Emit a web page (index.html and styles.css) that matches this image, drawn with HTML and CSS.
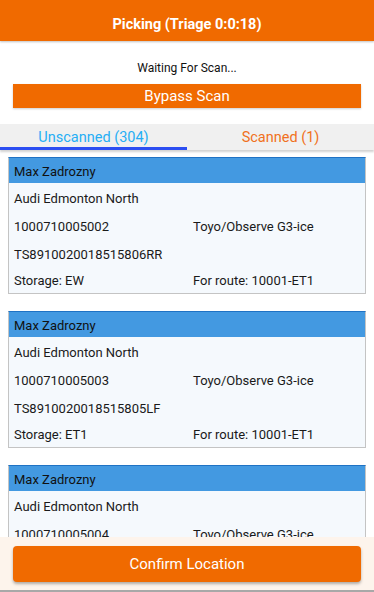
FILE: index.html
```html
<!DOCTYPE html>
<html>
<head>
<meta charset="utf-8">
<link rel="stylesheet" href="styles.css">
</head>
<body>
<div class="app">
  <header class="topbar"><span class="title">Picking (Triage 0:0:18)</span></header>
  <section class="scan">
    <div class="waiting">Waiting For Scan...</div>
    <button class="bypass">Bypass Scan</button>
  </section>
  <nav class="tabs">
    <div class="tab active">Unscanned (304)</div>
    <div class="tab other">Scanned (1)</div>
  </nav>
  <main class="list">
    <div class="card">
      <div class="card-head">Max Zadrozny</div>
      <div class="card-body">
        <div class="row"><span>Audi Edmonton North</span><span></span></div>
        <div class="row"><span>1000710005002</span><span>Toyo/Observe G3-ice</span></div>
        <div class="row"><span>TS8910020018515806RR</span><span></span></div>
        <div class="row"><span>Storage: EW</span><span>For route: 10001-ET1</span></div>
      </div>
    </div>
    <div class="card">
      <div class="card-head">Max Zadrozny</div>
      <div class="card-body">
        <div class="row"><span>Audi Edmonton North</span><span></span></div>
        <div class="row"><span>1000710005003</span><span>Toyo/Observe G3-ice</span></div>
        <div class="row"><span>TS8910020018515805LF</span><span></span></div>
        <div class="row"><span>Storage: ET1</span><span>For route: 10001-ET1</span></div>
      </div>
    </div>
    <div class="card">
      <div class="card-head">Max Zadrozny</div>
      <div class="card-body">
        <div class="row"><span>Audi Edmonton North</span><span></span></div>
        <div class="row"><span>1000710005004</span><span>Toyo/Observe G3-ice</span></div>
        <div class="row"><span>TS8910020018515804RF</span><span></span></div>
        <div class="row"><span>Storage: ET1</span><span>For route: 10001-ET1</span></div>
      </div>
    </div>
  </main>
  <footer class="footer">
    <button class="confirm">Confirm Location</button>
  </footer>
</div>
</body>
</html>
```
FILE: styles.css
```css
* { box-sizing: border-box; }
html, body { margin: 0; padding: 0; }
body {
  font-family: Roboto, "Noto Sans", sans-serif;
  background: #ffffff;
  width: 374px;
  height: 592px;
  overflow: hidden;
}
.app {
  display: flex;
  flex-direction: column;
  height: 592px;
}
.topbar {
  height: 41px;
  background: #f06a00;
  color: #ffffff;
  display: flex;
  align-items: center;
  justify-content: center;
  box-shadow: 0 1px 2px rgba(0,0,0,0.25);
  position: relative;
  z-index: 2;
  flex: none;
}
.title {
  font-weight: 700;
  font-size: 14.5px;
  padding-top: 7px;
}
.scan {
  flex: none;
  height: 83px;
  padding: 19px 13px 0;
  display: flex;
  flex-direction: column;
  align-items: stretch;
}
.waiting {
  text-align: center;
  font-size: 12px;
  line-height: 16px;
  color: #111;
}
.bypass {
  margin-top: 8px;
  height: 24px;
  border: none;
  background: #f06a00;
  color: #fff;
  font-family: inherit;
  font-size: 15px;
  padding: 0;
  box-shadow: 0 1px 2px rgba(0,0,0,0.2);
}
.tabs {
  flex: none;
  height: 26px;
  background: #f0f0f0;
  display: flex;
  box-shadow: 0 2px 2px rgba(0,0,0,0.18);
  position: relative;
  z-index: 1;
}
.tab {
  flex: 1;
  text-align: center;
  font-size: 14.5px;
  line-height: 22px;
  padding-top: 3px;
}
.tab.active {
  color: #25aef5;
  border-bottom: 3px solid #2c4ef2;
}
.tab.other {
  color: #f07020;
}
.list {
  flex: 1;
  overflow: hidden;
  padding: 7px 8px 0;
  display: flex;
  flex-direction: column;
  gap: 17px;
}
.card {
  flex: none;
  border: 1px solid #c4c4c4;
  border-top: 1px solid #1f72c4;
  background: #f5f9fd;
}
.card-head {
  background: #4399e1;
  height: 25px;
  line-height: 25px;
  padding-left: 5px;
  padding-top: 1px;
  font-size: 13px;
  color: #111;
}
.card-body {
  padding-top: 2px;
}
.row {
  display: grid;
  grid-template-columns: 179px 1fr;
  height: 28px;
  line-height: 28px;
  padding-left: 5px;
  font-size: 13px;
  color: #1a1a1a;
}
.row:last-child {
  height: 24px;
  line-height: 24px;
}
.footer {
  flex: none;
  height: 55px;
  background: #fdf4ec;
  padding: 9px 13px 0;
  border-bottom: 2px solid #a8a8a8;
  position: relative;
  z-index: 1;
}
.confirm {
  width: 100%;
  height: 36px;
  border: none;
  border-radius: 4px;
  background: #f06a00;
  color: #fff;
  font-family: inherit;
  font-size: 15px;
  box-shadow: 0 2px 3px rgba(0,0,0,0.3);
}
```
